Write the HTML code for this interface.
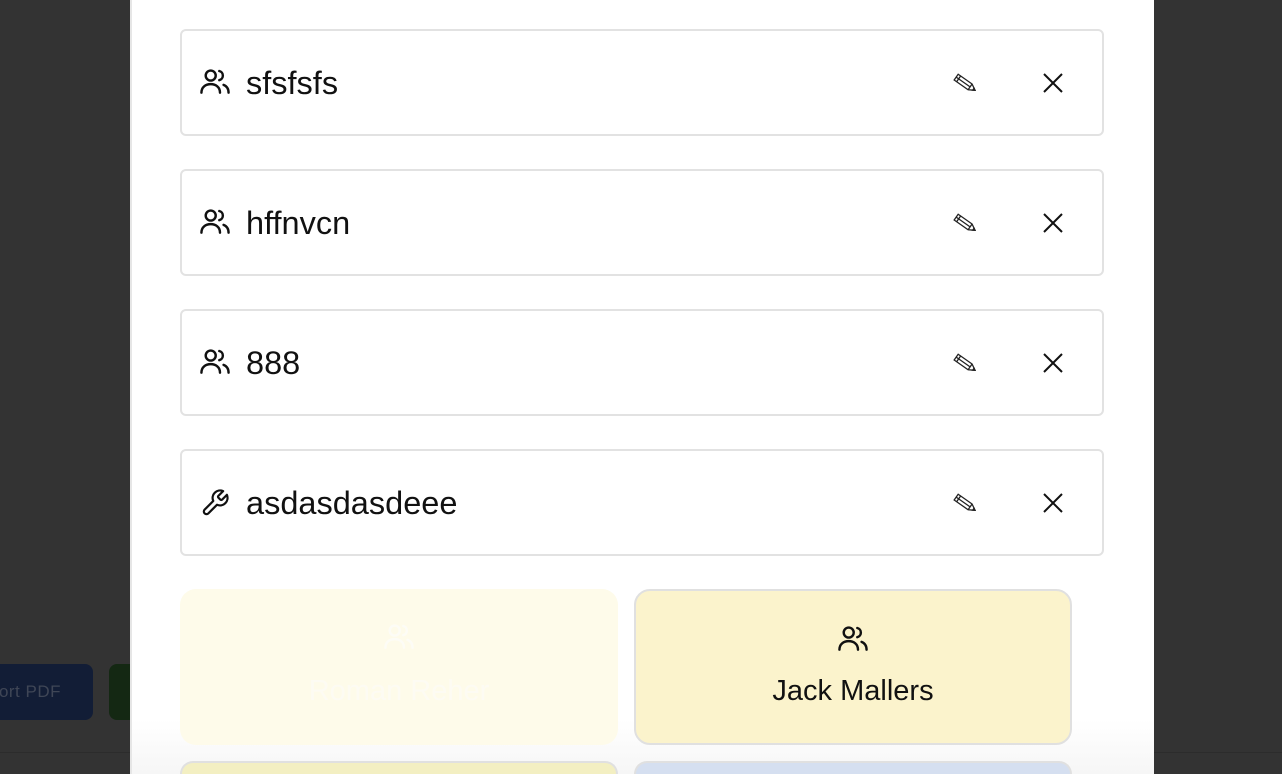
<!DOCTYPE html>
<html><head><meta charset="utf-8"><style>
html,body{margin:0;padding:0;width:1282px;height:774px;overflow:hidden;background:#333;font-family:"Liberation Sans",sans-serif;}
#wrap{position:relative;width:1282px;height:774px;overflow:hidden;background:#333}
.btn1{position:absolute;left:-20px;top:664px;width:113px;height:56px;background:#121d36;border-radius:8px;color:#3f4656;font-size:17px;line-height:56px;text-align:right;box-sizing:border-box;padding-right:32px;letter-spacing:.5px}
.btn2{position:absolute;left:109px;top:664px;width:60px;height:56px;background:#142813;border-radius:8px}
.line{position:absolute;left:0;top:752px;width:1282px;height:1px;background:#2c2c2c}
.modal{position:absolute;left:130px;top:0;width:1024px;height:774px;background:linear-gradient(#fff 0,#fff 720px,#f6f6f6 774px);border-left:2px solid #e6e6e6;box-sizing:border-box}
.row{position:absolute;left:180px;width:924px;height:107px;border:2px solid #e2e2e2;border-radius:6px;box-sizing:border-box;background:#fff}
.row .t{position:absolute;left:64px;top:1px;line-height:103px;font-size:32.5px;color:#111}
.row svg.ic{position:absolute;left:18px;top:37px}
.row svg.pen{position:absolute;left:770px;top:41px}
.row svg.x{position:absolute;left:860px;top:41px}
.card{position:absolute;width:438px;height:156px;border-radius:16px;box-sizing:border-box;text-align:center}
</style></head><body><div id="wrap">
<div class="btn1">ort PDF</div><div class="btn2"></div><div class="line"></div>
<div class="modal"></div>

<div class="row" style="top:29px"><svg class="ic" width="30" height="28" viewBox="1.5 3.5 21 18" fill="none" stroke="#111" stroke-width="1.7" stroke-linecap="round"><circle cx="9" cy="8" r="3.5"/><path d="M2.5 20c0-4 3-6 6.5-6s6.5 2 6.5 6"/><path d="M15 4.8a3.3 3.3 0 0 1 0 6.4"/><path d="M18 14.5c2 .8 3.5 2.6 3.5 5.5"/></svg><span class="t">sfsfsfs</span><svg class="pen" width="28" height="24" viewBox="0 0 28 24"><g transform="translate(14 12) rotate(35)" fill="none" stroke="#222" stroke-width="1.3"><path d="M-12 -3.5h17l6 3.5-6 3.5h-17z"/><path d="M-9 -3.5v7M5 -3.5v7M-12 0h17"/><path d="M9 -1.2l2 1.2-2 1.2z" fill="#222"/></g></svg><svg class="x" width="22" height="22" viewBox="0 0 22 22" stroke="#111" stroke-width="2"><path d="M2 2L20 20M20 2L2 20"/></svg></div>
<div class="row" style="top:169px"><svg class="ic" width="30" height="28" viewBox="1.5 3.5 21 18" fill="none" stroke="#111" stroke-width="1.7" stroke-linecap="round"><circle cx="9" cy="8" r="3.5"/><path d="M2.5 20c0-4 3-6 6.5-6s6.5 2 6.5 6"/><path d="M15 4.8a3.3 3.3 0 0 1 0 6.4"/><path d="M18 14.5c2 .8 3.5 2.6 3.5 5.5"/></svg><span class="t">hffnvcn</span><svg class="pen" width="28" height="24" viewBox="0 0 28 24"><g transform="translate(14 12) rotate(35)" fill="none" stroke="#222" stroke-width="1.3"><path d="M-12 -3.5h17l6 3.5-6 3.5h-17z"/><path d="M-9 -3.5v7M5 -3.5v7M-12 0h17"/><path d="M9 -1.2l2 1.2-2 1.2z" fill="#222"/></g></svg><svg class="x" width="22" height="22" viewBox="0 0 22 22" stroke="#111" stroke-width="2"><path d="M2 2L20 20M20 2L2 20"/></svg></div>
<div class="row" style="top:309px"><svg class="ic" width="30" height="28" viewBox="1.5 3.5 21 18" fill="none" stroke="#111" stroke-width="1.7" stroke-linecap="round"><circle cx="9" cy="8" r="3.5"/><path d="M2.5 20c0-4 3-6 6.5-6s6.5 2 6.5 6"/><path d="M15 4.8a3.3 3.3 0 0 1 0 6.4"/><path d="M18 14.5c2 .8 3.5 2.6 3.5 5.5"/></svg><span class="t">888</span><svg class="pen" width="28" height="24" viewBox="0 0 28 24"><g transform="translate(14 12) rotate(35)" fill="none" stroke="#222" stroke-width="1.3"><path d="M-12 -3.5h17l6 3.5-6 3.5h-17z"/><path d="M-9 -3.5v7M5 -3.5v7M-12 0h17"/><path d="M9 -1.2l2 1.2-2 1.2z" fill="#222"/></g></svg><svg class="x" width="22" height="22" viewBox="0 0 22 22" stroke="#111" stroke-width="2"><path d="M2 2L20 20M20 2L2 20"/></svg></div>
<div class="row" style="top:449px"><svg class="ic" width="30" height="30" viewBox="0 0 24 24" fill="none" stroke="#111" stroke-width="1.8" stroke-linejoin="round"><path d="M14.7 6.3a1 1 0 0 0 0 1.4l1.6 1.6a1 1 0 0 0 1.4 0l3.8-3.8a6 6 0 0 1-7.9 7.9l-6.9 6.9a2.1 2.1 0 0 1-3-3l6.9-6.9a6 6 0 0 1 7.9-7.9l-3.8 3.8z"/></svg><span class="t">asdasdasdeee</span><svg class="pen" width="28" height="24" viewBox="0 0 28 24"><g transform="translate(14 12) rotate(35)" fill="none" stroke="#222" stroke-width="1.3"><path d="M-12 -3.5h17l6 3.5-6 3.5h-17z"/><path d="M-9 -3.5v7M5 -3.5v7M-12 0h17"/><path d="M9 -1.2l2 1.2-2 1.2z" fill="#222"/></g></svg><svg class="x" width="22" height="22" viewBox="0 0 22 22" stroke="#111" stroke-width="2"><path d="M2 2L20 20M20 2L2 20"/></svg></div>

<div class="card" style="left:180px;top:589px;background:#fefbea;">
<svg style="position:absolute;left:204px;top:34px" width="30" height="28" viewBox="1.5 3.5 21 18" fill="none" stroke="#fdfcf6" stroke-width="1.7" stroke-linecap="round"><circle cx="9" cy="8" r="3.5"/><path d="M2.5 20c0-4 3-6 6.5-6s6.5 2 6.5 6"/><path d="M15 4.8a3.3 3.3 0 0 1 0 6.4"/><path d="M18 14.5c2 .8 3.5 2.6 3.5 5.5"/></svg>
<div style="position:absolute;left:0;right:0;top:86px;font-size:29px;color:#fdfbf3">Roman Reher</div></div>
<div class="card" style="left:634px;top:589px;background:#fbf3cc;border:2px solid #e0e0e0">
<svg style="position:absolute;left:202px;top:34px" width="30" height="28" viewBox="1.5 3.5 21 18" fill="none" stroke="#111" stroke-width="1.7" stroke-linecap="round"><circle cx="9" cy="8" r="3.5"/><path d="M2.5 20c0-4 3-6 6.5-6s6.5 2 6.5 6"/><path d="M15 4.8a3.3 3.3 0 0 1 0 6.4"/><path d="M18 14.5c2 .8 3.5 2.6 3.5 5.5"/></svg>
<div style="position:absolute;left:0;right:0;top:84px;font-size:29px;color:#111">Jack Mallers</div></div>
<div class="card" style="left:180px;top:761px;height:13px;border-radius:16px 16px 0 0;background:#f3efc2;border:2px solid #e0e0e0;border-bottom:none"></div>
<div class="card" style="left:634px;top:761px;height:13px;border-radius:16px 16px 0 0;background:#d5dff0;border:2px solid #e0e0e0;border-bottom:none"></div>
</div></body></html>
